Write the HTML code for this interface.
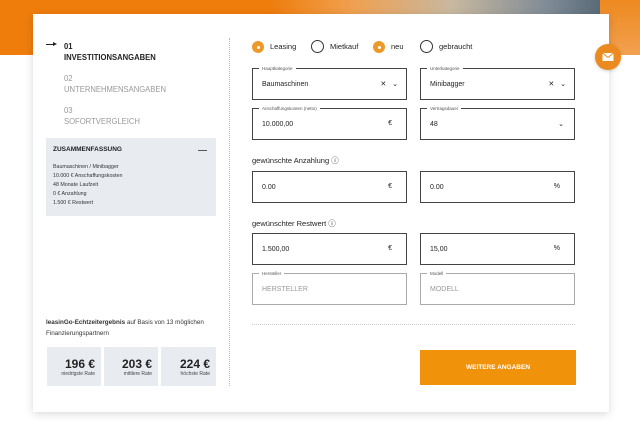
<!DOCTYPE html>
<html><head><meta charset="utf-8"><style>
*{box-sizing:border-box;margin:0;padding:0}
body{width:640px;height:426px;overflow:hidden;background:#fff;font-family:"Liberation Sans",sans-serif;color:#222;position:relative}
.bg{position:absolute;left:0;top:0;width:640px;height:55px;background:#ee7d0c}
.bg2{position:absolute;left:270px;top:0;width:330px;height:14px;background:linear-gradient(90deg,#ee7d0c 0%,#f0a050 25%,#c8b8a0 55%,#7d8a95 85%,#5a6a78 100%)}
.bgr{position:absolute;left:600px;top:0;width:40px;height:55px;background:linear-gradient(180deg,#ee8a20,#f2a050)}
.card{position:absolute;left:33px;top:14px;width:576px;height:398px;background:#fff;box-shadow:0 2px 8px rgba(0,0,0,.15)}
.abs{position:absolute}
.step{font-size:8.5px;line-height:11px;transform:scaleX(.9);transform-origin:left}
.field{position:absolute;border:1px solid #444;height:32px;width:155px;font-size:7px}
.field.g{border-color:#aaa}
.field .lab{position:absolute;top:-4px;left:6px;background:#fff;padding:0 3px;font-size:4.5px;color:#555;line-height:7px}
.field .v{position:absolute;left:9px;top:12px}
.field .r{position:absolute;right:14px;top:11px}
.radio{position:absolute;width:12px;height:12px;border-radius:50%;border:1px solid #333}
.radio.on{background:#eb9a2a;border:none}
.radio.on:after{content:"";position:absolute;left:4.5px;top:4.5px;width:3px;height:3px;border-radius:50%;background:#fff}
.rl{position:absolute;font-size:7.5px;top:42px}
.sec{font-size:7.5px;position:absolute}
.box{position:absolute;top:347px;width:54px;height:39px;background:#e8ecf1;text-align:right;padding-right:6px;padding-top:11px}
.box b{display:block;font-size:12px;line-height:13px}
.box span{display:block;font-size:5px;color:#444}
</style></head><body>
<div class="bg"></div><div class="bg2"></div><div class="bgr"></div>
<div class="card"></div>
<div class="abs" style="left:46px;top:44px;width:9px;border-top:1.5px solid #222"></div>
<div class="abs" style="left:53px;top:42px;width:0;height:0;border-left:4px solid #222;border-top:2.5px solid transparent;border-bottom:2.5px solid transparent"></div>
<div class="abs step" style="left:64px;top:41px;color:#222;font-weight:bold">01<br>INVESTITIONSANGABEN</div>
<div class="abs step" style="left:64px;top:73px;color:#999">02<br>UNTERNEHMENSANGABEN</div>
<div class="abs step" style="left:64px;top:105px;color:#999">03<br>SOFORTVERGLEICH</div>
<div class="abs" style="left:46px;top:138px;width:170px;height:78px;background:#e8ecf1"></div>
<div class="abs" style="left:53px;top:146px;font-size:6.5px;font-weight:bold">ZUSAMMENFASSUNG</div>
<div class="abs" style="left:198px;top:150px;width:9px;border-top:1px solid #555"></div>
<div class="abs" style="left:53px;top:163px;font-size:5.3px;line-height:9px;color:#333">Baumaschinen / Minibagger<br>10.000 € Anschaffungskosten<br>48 Monate Laufzeit<br>0 € Anzahlung<br>1.500 € Restwert</div>
<div class="abs" style="left:46px;top:317px;font-size:6.3px;line-height:11px;color:#333;width:175px"><b>leasinGo-Echtzeitergebnis</b> auf Basis von 13 möglichen Finanzierungspartnern</div>
<div class="box" style="left:47px"><b>196 €</b><span>niedrigste Rate</span></div>
<div class="box" style="left:104px"><b>203 €</b><span>mittlere Rate</span></div>
<div class="box" style="left:161px;width:55px"><b>224 €</b><span>höchste Rate</span></div>
<div class="abs" style="left:229px;top:38px;height:348px;border-left:1px dotted #bbb"></div>
<div class="radio on" style="left:252px;top:41px"></div><div class="rl" style="left:270px">Leasing</div>
<div class="radio" style="left:311px;top:40px;width:13px;height:13px"></div><div class="rl" style="left:330px">Mietkauf</div>
<div class="radio on" style="left:373px;top:41px"></div><div class="rl" style="left:391px">neu</div>
<div class="radio" style="left:420px;top:40px;width:13px;height:13px"></div><div class="rl" style="left:439px">gebraucht</div>
<div class="field" style="left:252px;top:68px"><div class="lab">Hauptkategorie</div><div class="v">Baumaschinen</div><div class="r" style="right:8px">✕ &nbsp;&nbsp;⌄</div></div>
<div class="field" style="left:420px;top:68px"><div class="lab">Unterkategorie</div><div class="v">Minibagger</div><div class="r" style="right:8px">✕ &nbsp;&nbsp;⌄</div></div>
<div class="field" style="left:252px;top:108px"><div class="lab">Anschaffungskosten (netto)</div><div class="v">10.000,00</div><div class="r">€</div></div>
<div class="field" style="left:420px;top:108px"><div class="lab">Vertragsdauer</div><div class="v">48</div><div class="r" style="right:10px">⌄</div></div>
<div class="sec" style="left:252px;top:155px">gewünschte Anzahlung ⓘ</div>
<div class="field" style="left:252px;top:171px"><div class="v">0.00</div><div class="r">€</div></div>
<div class="field" style="left:420px;top:171px"><div class="v">0.00</div><div class="r">%</div></div>
<div class="sec" style="left:252px;top:218px">gewünschter Restwert ⓘ</div>
<div class="field" style="left:252px;top:233px"><div class="v">1.500,00</div><div class="r">€</div></div>
<div class="field" style="left:420px;top:233px"><div class="v">15,00</div><div class="r">%</div></div>
<div class="field g" style="left:252px;top:273px"><div class="lab">Hersteller</div><div class="v" style="color:#999">HERSTELLER</div></div>
<div class="field g" style="left:420px;top:273px"><div class="lab">Modell</div><div class="v" style="color:#999">MODELL</div></div>
<div class="abs" style="left:252px;top:324px;width:323px;border-top:1px dotted #ccc"></div>
<div class="abs" style="left:420px;top:350px;width:156px;height:35px;background:#f0920a;color:#fff;font-size:6.5px;font-weight:bold;text-align:center;line-height:35px">WEITERE ANGABEN</div>
<div class="abs" style="left:595px;top:44px;width:26px;height:26px;border-radius:50%;background:#eb8a1e;box-shadow:0 1px 3px rgba(0,0,0,.2)"><svg width="26" height="26" viewBox="0 0 26 26"><rect x="7.5" y="9" width="11" height="8" fill="#fff"/><path d="M7.5 9 L13 13.5 L18.5 9" stroke="#eb8a1e" stroke-width="1" fill="none"/></svg></div>
</body></html>
